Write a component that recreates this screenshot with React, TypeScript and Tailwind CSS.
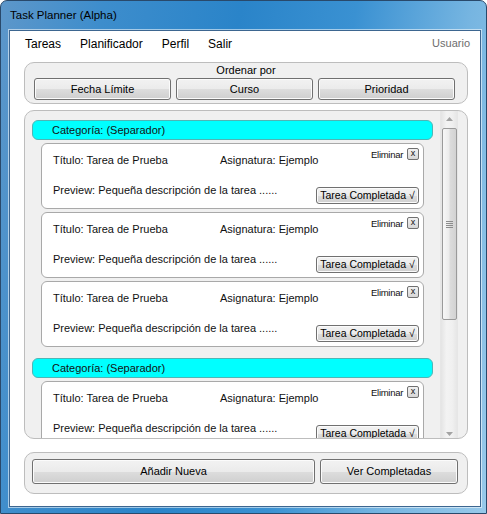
const FONT = "font-['Liberation_Sans','Segoe_UI',Arial,sans-serif]";

function WinButton({ label, className }: { label: string; className: string }) {
  return (
    <div
      className={`flex items-center justify-center whitespace-nowrap rounded-[3px] border border-[#707070] bg-[linear-gradient(180deg,#f2f2f2_0%,#ebebeb_50%,#dddddd_51%,#cfcfcf_100%)] text-black shadow-[inset_0_0_0_1px_#fbfbfb] ${className}`}
    >
      {label}
    </div>
  );
}

function CategoryBar() {
  return (
    <div className="flex h-[20px] w-[401px] shrink-0 items-center rounded-[6px] border border-[#4fb5b5] bg-[#00ffff] pl-[19px] text-[11px] leading-[14px] text-[#111]">
      Categoría: (Separador)
    </div>
  );
}

function TaskCard() {
  return (
    <div className="ml-[9px] mt-[3px] h-[66px] w-[383px] shrink-0 rounded-[6px] border border-[#a9a9a9] bg-white pl-[11px] pr-[4px] text-[11px] text-[#111]">
      <div className="flex items-start pt-[4px]">
        <span className="mt-[5px] w-[167px] whitespace-nowrap leading-[14px]">Título: Tarea de Prueba</span>
        <span className="mt-[5px] flex-1 whitespace-nowrap leading-[14px]">Asignatura: Ejemplo</span>
        <span className="whitespace-nowrap text-[9.5px] leading-[13px] tracking-[-0.3px]">Eliminar</span>
        <div className="ml-[4px] flex h-[12px] w-[12px] items-center justify-center rounded-[2px] border border-[#707070] bg-[linear-gradient(180deg,#f2f2f2,#d6d6d6)] pb-[2px] text-[9px] leading-none">
          x
        </div>
      </div>
      <div className="flex items-start">
        <span className="mt-[16px] flex-1 whitespace-nowrap leading-[14px]">
          Preview: Pequeña descripción de la tarea ......
        </span>
        <WinButton label="Tarea Completada √" className="mt-[20px] h-[17px] w-[103px] text-[10.5px]" />
      </div>
    </div>
  );
}

function Scrollbar() {
  return (
    <div className="ml-[6px] flex w-[18px] flex-col items-center border-x border-[#e6e6e6] bg-[linear-gradient(90deg,#e4e4e4,#f3f3f3_35%,#f0f0f0_70%,#e6e6e6)]">
      <div className="flex h-[16px] items-center justify-center">
        <svg width="7" height="4" viewBox="0 0 7 4">
          <path d="M0 4 L3.5 0 L7 4 Z" fill="#a3a3a3" />
        </svg>
      </div>
      <div className="mt-[1px] flex h-[192px] w-[15px] flex-col items-center justify-center gap-[1px] rounded-[2px] border border-[#9a9a9a] bg-[linear-gradient(90deg,#f7f7f7,#ececec_45%,#dcdcdc_55%,#d2d2d2)]">
        <div className="h-[1px] w-[7px] bg-[#8c8c8c]" />
        <div className="h-[1px] w-[7px] bg-[#8c8c8c]" />
        <div className="h-[1px] w-[7px] bg-[#8c8c8c]" />
        <div className="h-[1px] w-[7px] bg-[#8c8c8c]" />
      </div>
      <div className="flex-1" />
      <div className="flex h-[14px] items-end justify-center pb-[2px]">
        <svg width="7" height="4" viewBox="0 0 7 4">
          <path d="M0 0 L3.5 4 L7 0 Z" fill="#a3a3a3" />
        </svg>
      </div>
    </div>
  );
}

export default function App() {
  return (
    <div
      className={`${FONT} flex h-[514px] w-[487px] flex-col overflow-hidden rounded-t-[7px] border border-[#29496b] bg-[linear-gradient(100deg,#5d97ca_0%,#3d8dcc_18%,#2a84c9_42%,#3a91d2_62%,#76b5e1_82%,#98c9ea_100%)]`}
    >
      <div className="flex h-[29px] shrink-0 items-center pl-[9px] text-[11.5px] text-black">
        Task Planner (Alpha)
      </div>

      <div className="ml-[8px] flex h-[477px] w-[472px] flex-col border border-[#3d6690] bg-white shadow-[0_0_0_1px_rgba(255,255,255,0.55)]">
        <div className="flex h-[25px] shrink-0 items-center gap-[19px] pl-[15px] pr-[10px] text-[12px] text-black">
          <span>Tareas</span>
          <span>Planificador</span>
          <span>Perfil</span>
          <span>Salir</span>
          <span className="ml-auto text-[11px] text-[#6d6d6d]">Usuario</span>
        </div>

        <div className="ml-[14px] mt-[6px] h-[42px] w-[444px] shrink-0 rounded-[10px] border border-[#bdbdbd] bg-[#f0f0f0] text-[11px] text-black">
          <div className="text-center leading-[14px]">Ordenar por</div>
          <div className="mt-[1px] grid grid-cols-3 gap-[5px] pl-[9px] pr-[12px]">
            <WinButton label="Fecha Límite" className="h-[22px]" />
            <WinButton label="Curso" className="h-[22px]" />
            <WinButton label="Prioridad" className="h-[22px]" />
          </div>
        </div>

        <div className="ml-[14px] mt-[6px] flex h-[329px] w-[444px] shrink-0 rounded-[10px] border border-[#bdbdbd] bg-[#f0f0f0]">
          <div className="ml-[7px] flex w-[402px] flex-col overflow-hidden pt-[9px]">
            <CategoryBar />
            <TaskCard />
            <TaskCard />
            <TaskCard />
            <div className="mt-[11px]">
              <CategoryBar />
            </div>
            <TaskCard />
          </div>
          <Scrollbar />
        </div>

        <div className="ml-[14px] mt-[13px] h-[42px] w-[444px] shrink-0 rounded-[10px] border border-[#bdbdbd] bg-[#f0f0f0] pl-[7px] pr-[9px] pt-[6px] text-[11px]">
          <div className="grid grid-cols-[1fr_138px] gap-[5px]">
            <WinButton label="Añadir Nueva" className="h-[25px]" />
            <WinButton label="Ver Completadas" className="h-[25px]" />
          </div>
        </div>
      </div>
    </div>
  );
}
